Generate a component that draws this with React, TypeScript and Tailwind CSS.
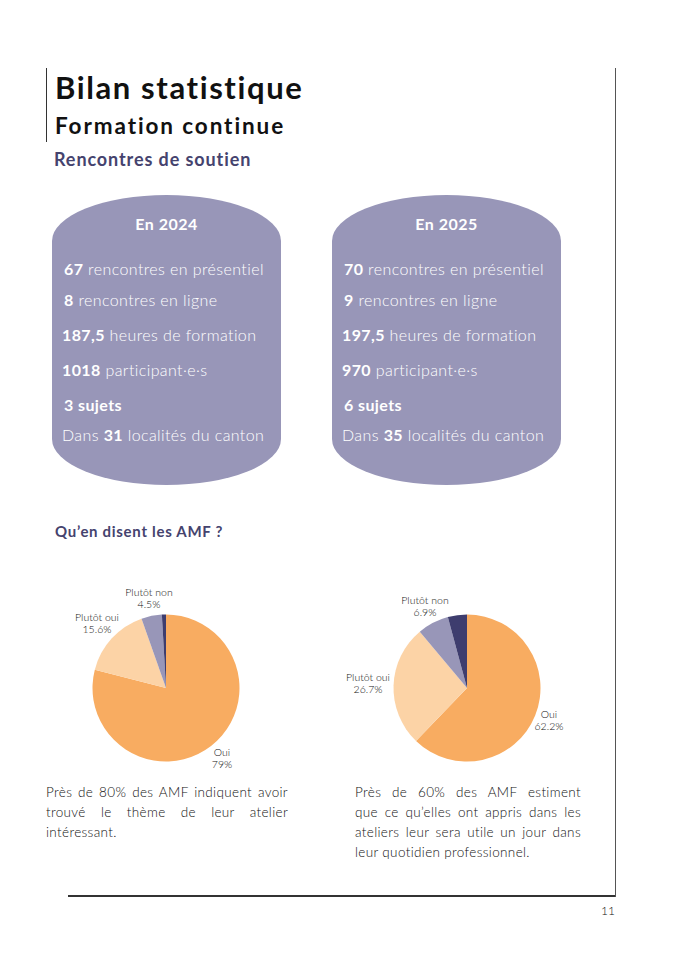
import React from "react";

const FONT = { fontFamily: "Lato, 'Open Sans', sans-serif" };

type Slice = { value: number; color: string };

const slicePath = (cx: number, cy: number, r: number, a0: number, a1: number) => {
  const p = (f: number) => [cx + r * Math.sin(2 * Math.PI * f), cy - r * Math.cos(2 * Math.PI * f)];
  const [x0, y0] = p(a0);
  const [x1, y1] = p(a1);
  const large = a1 - a0 > 0.5 ? 1 : 0;
  return `M${cx},${cy} L${x0},${y0} A${r},${r} 0 ${large} 1 ${x1},${y1} Z`;
};

const Pie = ({
  cx,
  slices,
  labels,
}: {
  cx: number;
  slices: Slice[];
  labels: { x: number; y: number; name: string; pct: string }[];
}) => {
  let acc = 0;
  return (
    <svg width="240" height="190" className="overflow-visible block">
      {slices.map((s, i) => {
        const a0 = acc;
        acc += s.value / 100;
        return <path key={i} d={slicePath(cx, 107, 73.5, a0, acc)} fill={s.color} />;
      })}
      {labels.map((l, i) => (
        <text key={i} textAnchor="middle" fontSize="10.5" fontWeight="300" fill="#111" style={FONT}>
          <tspan x={l.x} y={l.y}>{l.name}</tspan>
          <tspan x={l.x} y={l.y + 11.5}>{l.pct}</tspan>
        </text>
      ))}
    </svg>
  );
};

// lines are set by hand so the breaks follow the printed page
const Para = ({ lines }: { lines: string[] }) => (
  <div className="text-[13.5px] font-light leading-[20px] tracking-[0.35px] text-[#111]">
    {lines.map((l, i) => (
      <div
        key={i}
        className={`whitespace-nowrap ${i < lines.length - 1 ? "text-justify [text-align-last:justify]" : ""}`}
      >
        {l}
      </div>
    ))}
  </div>
);

const Barrel = ({ year, rows }: { year: string; rows: { b: string; t: string; mt: string; pl: string; pre?: string }[] }) => (
  <div className="w-[229px] h-[290px] bg-[#9896b8] rounded-[50%/46px] text-white pt-[18px]">
    <div className="text-center text-[16px] font-bold leading-[22px] tracking-[0.5px]">{year}</div>
    {rows.map((r, i) => (
      <div key={i} className={`text-[16px] font-light leading-[20px] tracking-[0.4px] whitespace-nowrap ${r.mt} ${r.pl}`}>
        {r.pre}
        <span className="font-bold">{r.b}</span>
        {r.t}
      </div>
    ))}
  </div>
);

export default function App() {
  return (
    <div className="min-h-[968px] w-[684px] bg-white pt-[68px] text-[#222]" style={FONT}>
      <div className="ml-[46px] w-[570px] border-r-[1.5px] border-[#555]">
        <div className="border-l-[1.5px] border-[#333] pl-[8px]">
          <h1 className="text-[31px] font-bold leading-[38px] tracking-[1.6px] text-[#111]">Bilan statistique</h1>
          <h2 className="text-[22.5px] font-bold leading-[32px] tracking-[1.9px] text-[#111] mt-[4px]">Formation continue</h2>
        </div>
        <h3 className="ml-[8px] mt-[4px] text-[18px] font-bold leading-[26px] tracking-[0.9px] text-[#45436e]">Rencontres de soutien</h3>

        <div className="flex gap-[51px] ml-[6px] mt-[23px]">
          <Barrel
            year="En 2024"
            rows={[
              { b: "67", t: " rencontres en présentiel", mt: "mt-[24px]", pl: "pl-[12px]" },
              { b: "8", t: " rencontres en ligne", mt: "mt-[11px]", pl: "pl-[12px]" },
              { b: "187,5", t: " heures de formation", mt: "mt-[15px]", pl: "pl-[10px]" },
              { b: "1018", t: " participant·e·s", mt: "mt-[15px]", pl: "pl-[10px]" },
              { b: "3 sujets", t: "", mt: "mt-[15px]", pl: "pl-[12px]" },
              { pre: "Dans ", b: "31", t: " localités du canton", mt: "mt-[10px]", pl: "pl-[10px]" },
            ]}
          />
          <Barrel
            year="En 2025"
            rows={[
              { b: "70", t: " rencontres en présentiel", mt: "mt-[24px]", pl: "pl-[12px]" },
              { b: "9", t: " rencontres en ligne", mt: "mt-[11px]", pl: "pl-[12px]" },
              { b: "197,5", t: " heures de formation", mt: "mt-[15px]", pl: "pl-[10px]" },
              { b: "970", t: " participant·e·s", mt: "mt-[15px]", pl: "pl-[10px]" },
              { b: "6 sujets", t: "", mt: "mt-[15px]", pl: "pl-[12px]" },
              { pre: "Dans ", b: "35", t: " localités du canton", mt: "mt-[10px]", pl: "pl-[10px]" },
            ]}
          />
        </div>

        <h3 className="ml-[9px] mt-[35px] text-[15px] font-bold leading-[22px] tracking-[0.7px] text-[#45436e]">Qu’en disent les AMF ?</h3>

        <div className="flex mt-[39px]">
          <div className="w-[242px]">
            <Pie
              cx={120}
              slices={[
                { value: 79, color: "#f8ac61" },
                { value: 15.6, color: "#fcd3a6" },
                { value: 4.5, color: "#9896b8" },
                { value: 0.9, color: "#3e3d6e" },
              ]}
              labels={[
                { x: 103, y: 15, name: "Plutôt non", pct: "4.5%" },
                { x: 51, y: 40, name: "Plutôt oui", pct: "15.6%" },
                { x: 176, y: 175, name: "Oui", pct: "79%" },
              ]}
            />
            <div className="mt-[11px]">
              <Para lines={["Près de 80% des AMF indiquent avoir", "trouvé le thème de leur atelier", "intéressant."]} />
            </div>
          </div>
          <div className="w-[226px] ml-[67px]">
            <Pie
              cx={112}
              slices={[
                { value: 62.2, color: "#f8ac61" },
                { value: 26.7, color: "#fcd3a6" },
                { value: 6.9, color: "#9896b8" },
                { value: 4.2, color: "#3e3d6e" },
              ]}
              labels={[
                { x: 70, y: 23, name: "Plutôt non", pct: "6.9%" },
                { x: 13, y: 100, name: "Plutôt oui", pct: "26.7%" },
                { x: 194, y: 137, name: "Oui", pct: "62.2%" },
              ]}
            />
            <div className="mt-[11px]">
              <Para
                lines={[
                  "Près de 60% des AMF estiment",
                  "que ce qu’elles ont appris dans les",
                  "ateliers leur sera utile un jour dans",
                  "leur quotidien professionnel.",
                ]}
              />
            </div>
          </div>
        </div>

        <div className="ml-[22px] mt-[33px] border-b-2 border-[#333]" />
      </div>
      <div className="ml-[46px] w-[570px] text-right text-[12px] font-light leading-[16px] mt-[6px] pr-[1px] text-[#111]">11</div>
    </div>
  );
}
